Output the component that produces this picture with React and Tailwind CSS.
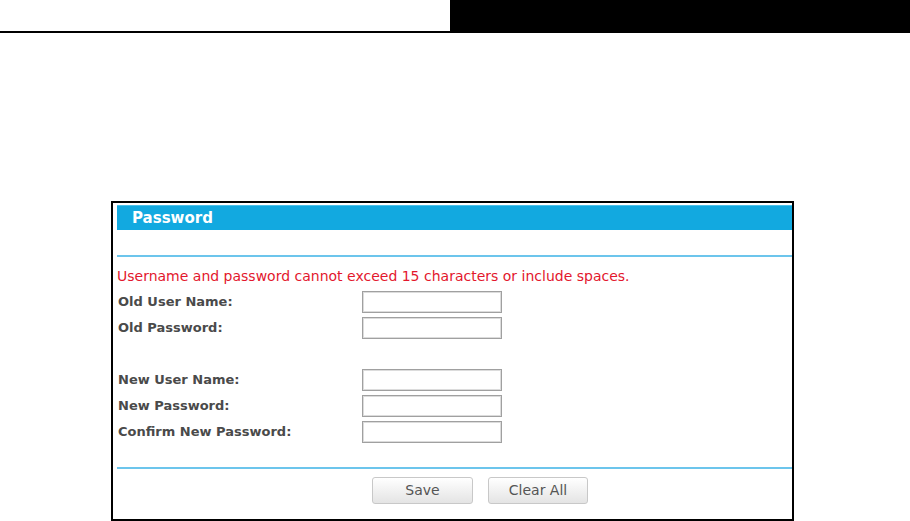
const font = { fontFamily: '"DejaVu Sans", Verdana, sans-serif' };

function Field({ label }) {
  return (
    <div className="flex h-[26px] items-center">
      <span className="w-[245px] pl-[1px] text-[13px] font-bold text-[#4a4a4a]">{label}</span>
      <input
        type="text"
        className="h-[22px] w-[140px] border border-[#a0a0a0] bg-white shadow-[inset_0_0_0_1px_#dcdcdc] outline-none"
      />
    </div>
  );
}

function Button({ children, className = '' }) {
  return (
    <button
      type="button"
      className={`h-[27px] rounded-[3px] border border-[#c8c8c8] bg-gradient-to-b from-white to-[#e4e4e4] text-[14px] text-[#555] ${className}`}
    >
      {children}
    </button>
  );
}

export default function App() {
  return (
    <div className="h-[521px] w-[910px] overflow-hidden bg-white" style={font}>
      <div className="flex h-[33px]">
        <div className="w-[450px] border-b-2 border-black" />
        <div className="flex-1 bg-black" />
      </div>

      <div className="ml-[111px] mt-[168px] h-[320px] w-[683px] border-2 border-black pl-[4px] pt-[2px]">
        <div className="flex h-[25px] items-center border-t border-[#4cc0ea] bg-[#12a9e0] pl-[15px] text-[15px] font-bold text-white">
          Password
        </div>
        <div className="h-[25px]" />
        <div className="h-[2px] bg-[#6cc5ec]" />

        <div className="mt-[6px] flex h-[26px] items-center text-[14px] text-[#e3172d]">
          Username and password cannot exceed 15 characters or include spaces.
        </div>
        <Field label="Old User Name:" />
        <Field label="Old Password:" />
        <div className="h-[26px]" />
        <Field label="New User Name:" />
        <Field label="New Password:" />
        <Field label="Confirm New Password:" />

        <div className="h-[22px]" />
        <div className="h-[2px] bg-[#6cc5ec]" />

        <div className="mt-[8px] flex gap-[15px] pl-[255px]">
          <Button className="w-[101px]">Save</Button>
          <Button className="w-[100px]">Clear All</Button>
        </div>
      </div>
    </div>
  );
}
